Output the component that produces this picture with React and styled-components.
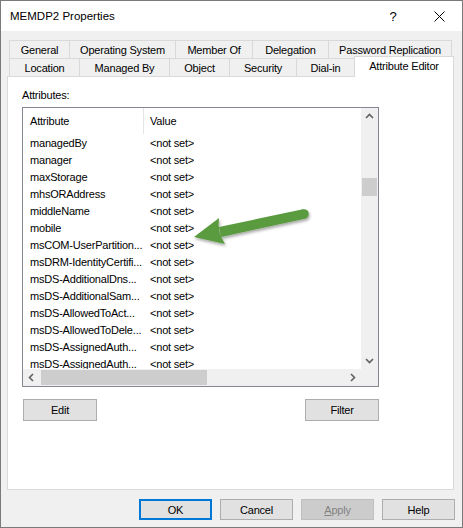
import React from "react"
import styled, { createGlobalStyle } from "styled-components"

const tabRows = [
  [
    { label: "General", width: 60 },
    { label: "Operating System", width: 106 },
    { label: "Member Of", width: 77 },
    { label: "Delegation", width: 76 },
    { label: "Password Replication", width: 124 },
  ],
  [
    { label: "Location", width: 70 },
    { label: "Managed By", width: 90 },
    { label: "Object", width: 60 },
    { label: "Security", width: 67 },
    { label: "Dial-in", width: 58 },
    { label: "Attribute Editor", width: 100, selected: true },
  ],
]

const attributes = [
  "managedBy",
  "manager",
  "maxStorage",
  "mhsORAddress",
  "middleName",
  "mobile",
  "msCOM-UserPartition...",
  "msDRM-IdentityCertifi...",
  "msDS-AdditionalDns...",
  "msDS-AdditionalSam...",
  "msDS-AllowedToAct...",
  "msDS-AllowedToDele...",
  "msDS-AssignedAuth...",
  "msDS-AssignedAuth...",
]

const Chevron = ({ dir }) => {
  const turn = { up: 0, right: 90, down: 180, left: 270 }[dir]
  return (
    <svg width="9" height="9" viewBox="0 0 9 9">
      <path
        d="M1 6 L4.5 2.5 L8 6"
        fill="none"
        stroke="#606060"
        strokeWidth="1.6"
        transform={`rotate(${turn} 4.5 4.5)`}
      />
    </svg>
  )
}

const GreenArrow = () => (
  <ArrowLayer width="130" height="55" viewBox="0 0 130 55">
    <defs>
      <filter id="shade" x="-20%" y="-40%" width="140%" height="180%">
        <feDropShadow dx="1" dy="2" stdDeviation="1.6" floodColor="#000" floodOpacity="0.35" />
      </filter>
    </defs>
    <g filter="url(#shade)" fill="#5a9b40">
      <path d="M33 26 L117 8.3 L119 17.7 L35 36 Z" />
      <circle cx="118" cy="13" r="4.8" />
      <path d="M8 36 L33 17 Q31 31 39 43 Z" />
    </g>
  </ArrowLayer>
)

const App = () => {
  return (
    <>
      <GlobalStyle />
      <Window>
        <TitleBar>
          <Title>MEMDP2 Properties</Title>
          <CaptionButton>?</CaptionButton>
          <CaptionButton>
            <svg width="11" height="11" viewBox="0 0 11 11">
              <path d="M0.5 0.5 L10.5 10.5 M10.5 0.5 L0.5 10.5" stroke="#000" strokeWidth="1" />
            </svg>
          </CaptionButton>
        </TitleBar>
        <Body>
          <TabStrip>
            {tabRows.map((row, i) => (
              <TabRow key={i}>
                {row.map((tab) => (
                  <Tab key={tab.label} $width={tab.width} $selected={tab.selected}>
                    {tab.label}
                  </Tab>
                ))}
              </TabRow>
            ))}
          </TabStrip>
          <Panel>
            <Label>Attributes:</Label>
            <ListView>
              <ListContent>
                <Header>
                  <HeaderCell $first>Attribute</HeaderCell>
                  <HeaderCell>Value</HeaderCell>
                </Header>
                {attributes.map((name, i) => (
                  <Row key={i}>
                    <Cell $first>{name}</Cell>
                    <Cell>&lt;not set&gt;</Cell>
                  </Row>
                ))}
              </ListContent>
              <VScroll>
                <ScrollButton>
                  <Chevron dir="up" />
                </ScrollButton>
                <VTrack>
                  <VThumb $offset={53} />
                </VTrack>
                <ScrollButton>
                  <Chevron dir="down" />
                </ScrollButton>
              </VScroll>
              <HScroll>
                <ScrollButton>
                  <Chevron dir="left" />
                </ScrollButton>
                <HTrack>
                  <HThumb $offset={1} $length={166} />
                </HTrack>
                <ScrollButton>
                  <Chevron dir="right" />
                </ScrollButton>
              </HScroll>
              <Corner />
            </ListView>
            <PanelButtons>
              <Button $panel>Edit</Button>
              <Button $panel>Filter</Button>
            </PanelButtons>
          </Panel>
          <ButtonBar>
            <Button $default>OK</Button>
            <Button>Cancel</Button>
            <Button disabled>
              <u>A</u>pply
            </Button>
            <Button>Help</Button>
          </ButtonBar>
        </Body>
        <GreenArrow />
      </Window>
    </>
  )
}

export default App

const GlobalStyle = createGlobalStyle`
  html, body {
    margin: 0;
    padding: 0;
    background: #ffffff;
  }
`

const Window = styled.div`
  position: relative;
  width: 463px;
  height: 528px;
  box-sizing: border-box;
  border: 1px solid #7a7a7a;
  background: #f0f0f0;
  display: flex;
  flex-direction: column;
  font-family: "Liberation Sans", Arial, sans-serif;
  font-size: 11px;
  letter-spacing: -0.2px;
  color: #000;
`

const TitleBar = styled.div`
  height: 30px;
  flex: none;
  background: #ffffff;
  display: flex;
  align-items: center;
  padding-left: 9px;
`

const Title = styled.div`
  flex: 1;
  font-size: 11.5px;
  letter-spacing: 0;
`

const CaptionButton = styled.div`
  width: 46px;
  height: 30px;
  display: flex;
  align-items: center;
  justify-content: center;
  font-size: 13px;
  letter-spacing: 0;
`

const Body = styled.div`
  flex: 1;
  display: flex;
  flex-direction: column;
  padding: 9px 8px 7px 6px;
`

const TabStrip = styled.div`
  display: flex;
  flex-direction: column;
  margin-left: 2px;
  position: relative;
  z-index: 2;
`

const TabRow = styled.div`
  display: flex;
  height: 18px;
  align-items: flex-start;

  > *:last-child {
    border-right: 1px solid #d9d9d9;
  }
`

const Tab = styled.div`
  box-sizing: border-box;
  width: ${(p) => p.$width}px;
  height: ${(p) => (p.$selected ? 21 : 18)}px;
  margin-top: ${(p) => (p.$selected ? -2 : 0)}px;
  border-top: 1px solid #d9d9d9;
  border-left: 1px solid #d9d9d9;
  background: ${(p) => (p.$selected ? "#ffffff" : "#f0f0f0")};
  display: flex;
  align-items: center;
  justify-content: center;
  padding-bottom: ${(p) => (p.$selected ? 2 : 0)}px;
  white-space: nowrap;
`

const Panel = styled.div`
  box-sizing: border-box;
  height: 414px;
  flex: none;
  background: #ffffff;
  border: 1px solid #d9d9d9;
  padding: 12px 0 0 14px;
  display: flex;
  flex-direction: column;
`

const Label = styled.div`
  line-height: 13px;
  height: 13px;
  margin-bottom: 5px;
`

const ListView = styled.div`
  box-sizing: border-box;
  width: 357px;
  height: 280px;
  border: 1px solid #828790;
  display: grid;
  grid-template-columns: 1fr 17px;
  grid-template-rows: 1fr 17px;
`

const ListContent = styled.div`
  overflow: hidden;
  background: #ffffff;
`

const Header = styled.div`
  display: flex;
  height: 26px;
  align-items: stretch;
`

const HeaderCell = styled.div`
  box-sizing: border-box;
  width: ${(p) => (p.$first ? "121px" : "auto")};
  padding-left: ${(p) => (p.$first ? 7 : 6)}px;
  border-right: ${(p) => (p.$first ? "1px solid #e5e5e5" : "none")};
  display: flex;
  align-items: center;
`

const Row = styled.div`
  display: flex;
  height: 17px;
  align-items: center;
  margin-top: ${(p) => (p.$first ? 0 : 0)}px;
`

const Cell = styled.div`
  box-sizing: border-box;
  width: ${(p) => (p.$first ? "121px" : "auto")};
  padding-left: ${(p) => (p.$first ? 7 : 6)}px;
  white-space: nowrap;
  overflow: hidden;
`

const VScroll = styled.div`
  display: flex;
  flex-direction: column;
  background: #f0f0f0;
`

const HScroll = styled.div`
  display: flex;
  background: #f0f0f0;
`

const ScrollButton = styled.div`
  width: 17px;
  height: 17px;
  flex: none;
  display: flex;
  align-items: center;
  justify-content: center;
`

const VTrack = styled.div`
  flex: 1;
  display: flex;
  flex-direction: column;
  align-items: center;
`

const VThumb = styled.div`
  width: 15px;
  height: 18px;
  margin-top: ${(p) => p.$offset}px;
  background: #cdcdcd;
`

const HTrack = styled.div`
  flex: 1;
  display: flex;
  align-items: center;
`

const HThumb = styled.div`
  height: 15px;
  width: ${(p) => p.$length}px;
  margin-left: ${(p) => p.$offset}px;
  background: #cdcdcd;
`

const Corner = styled.div`
  background: #f0f0f0;
`

const PanelButtons = styled.div`
  width: 357px;
  margin-top: 12px;
  display: flex;
  justify-content: space-between;
  padding-left: 1px;
  box-sizing: border-box;
`

const ButtonBar = styled.div`
  margin-top: 9px;
  margin-right: -1px;
  display: flex;
  justify-content: flex-end;
  gap: 8px;
`

const Button = styled.button`
  box-sizing: border-box;
  width: ${(p) => (p.$panel ? 74 : 73)}px;
  height: ${(p) => (p.$panel ? 22 : 21)}px;
  padding: 0;
  margin: 0;
  font: inherit;
  letter-spacing: inherit;
  color: #000;
  background: #e1e1e1;
  border: ${(p) => (p.$default ? "2px solid #0078d7" : "1px solid #adadad")};

  &:disabled {
    background: #cccccc;
    border-color: #bfbfbf;
    color: #838383;
  }
`

const ArrowLayer = styled.svg`
  position: absolute;
  left: 185px;
  top: 200px;
  pointer-events: none;
  overflow: visible;
`
